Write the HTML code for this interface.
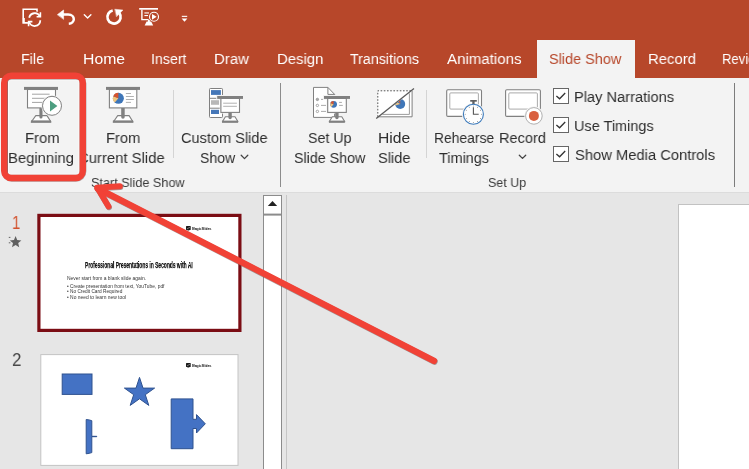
<!DOCTYPE html>
<html><head><meta charset="utf-8"><title>Slide Show</title>
<style>
html,body{margin:0;padding:0;}
body{width:749px;height:469px;overflow:hidden;position:relative;background:#e6e6e6;font-family:"Liberation Sans",sans-serif;}
.a{position:absolute;}
.x{position:absolute;white-space:nowrap;transform-origin:0 0;will-change:transform;}
svg{position:absolute;left:0;top:0;}
</style></head><body>
<div class="a" style="left:0;top:0;width:749px;height:78px;background:#b7472a;"></div>
<div class="a" style="left:0;top:78px;width:749px;height:114px;background:#f3f3f3;"></div>
<div class="a" style="left:0;top:192px;width:749px;height:1px;background:#dcdcdc;"></div>
<div class="a" style="left:537px;top:40px;width:98px;height:38px;background:#f3f3f3;"></div>
<svg width="749" height="469" viewBox="0 0 749 469">
<!-- quick access toolbar -->
<g fill="none" stroke="#fff" stroke-linecap="round" stroke-linejoin="round">
  <!-- autosave -->
  <path d="M23.2 9.300H37v13.600H23.200z" stroke-width="1.600" stroke-linejoin="miter"/>
  <rect x="22.800" y="18" width="2" height="5" fill="#fff" stroke="none"/>
  <circle cx="34.700" cy="18.900" r="7.600" fill="#b7472a" stroke="none"/>
  <path d="M29.200 17.700A5.700 5.700 0 0 1 39.900 16.400M40.300 20.300A5.700 5.700 0 0 1 29.100 21.800" stroke-width="1.800" stroke-linecap="butt"/>
  <path d="M40.400 12.300V16.800H36.600M28.600 26.200V21.600H32.400" stroke-width="1.600" stroke-linecap="butt" stroke-linejoin="miter"/>
  <!-- undo -->
  <path d="M62.500 14.500H68.200C72.200 14.500 73.800 17.200 73.800 19.200C73.800 21.600 71.600 23.500 68.800 23.700" stroke-width="2.500" stroke-linecap="butt"/>
  <path d="M57.600 14.500 63.600 10v9z" fill="#fff" stroke-width="0.600"/>
  <path d="M84.300 14.800 87.600 18 90.900 14.800" stroke-width="1.400"/>
  <!-- repeat -->
  <path d="M112.700 10.500A6.600 6.600 0 1 0 119.400 13.100" stroke-width="2.700" stroke-linecap="butt"/>
  <path d="M115 9.200 123 10 116.700 16.600z" fill="#fff" stroke-width="0.400"/>
</g>
<!-- present from beginning (qat) -->
<g fill="#fff">
  <rect x="139.2" y="8" width="18.8" height="1.7"/>
  <path d="M141.2 9.7h1.4v9.2h6v1.4h-7.4z"/>
  <rect x="144.4" y="12.4" width="4.6" height="1.1"/>
  <rect x="144.4" y="15" width="3.6" height="1.1"/>
  <path d="M146.6 21.6h4.6l2 3.8h-8.6z"/>
  <rect x="148" y="20" width="1.8" height="2.6"/>
</g>
<circle cx="154" cy="16.800" r="4.500" fill="#b7472a" stroke="#fff" stroke-width="1.100"/>
<path d="M152 13.900v5.800l4.600-2.900z" fill="#fff"/>
<rect x="181.8" y="15.8" width="5.4" height="1.1" fill="#fff"/>
<path d="M181.6 18.6h5.8l-2.9 3.2z" fill="#fff"/>

<!-- separators -->
<rect x="173" y="90" width="1" height="68" fill="#d4d4d4"/>
<rect x="426" y="90" width="1" height="68" fill="#d4d4d4"/>
<rect x="280" y="83" width="1" height="104" fill="#8c8c8c"/>
<rect x="734" y="83" width="1" height="104" fill="#7c7c7c"/>

<!-- ICON: from beginning -->
<g>
  <rect x="27.5" y="89.5" width="28" height="18.4" fill="#fff" stroke="#808080" stroke-width="1.1"/>
  <rect x="24" y="86.9" width="34" height="3" fill="#808080"/>
  <g stroke="#a4a4a4" stroke-width="1"><path d="M32 94.2h17.6M32 98.3h17.6M32 102.4h12"/></g>
  <path d="M35.8 115.6h11.2l4 6.4h-19.8z" fill="#fff" stroke="#808080" stroke-width="1.1" stroke-linejoin="round"/>
  <rect x="31" y="120.4" width="20" height="2.3" fill="#808080"/>
  <path d="M39.4 108h3.1v9a1.55 1.55 0 0 1-3.1 0z" fill="#808080"/>
  <circle cx="52" cy="105.8" r="10.6" fill="#f3f3f3"/>
  <circle cx="52" cy="105.8" r="9.5" fill="#fff" stroke="#808080" stroke-width="1"/>
  <path d="M50 100.6v10.8l7.4-5.4z" fill="#4d9e80"/>
</g>
<!-- ICON: from current slide -->
<g>
  <rect x="109.4" y="89.5" width="27.4" height="18.4" fill="#fff" stroke="#808080" stroke-width="1.1"/>
  <rect x="106" y="86.9" width="34" height="3" fill="#808080"/>
  <circle cx="118.4" cy="98.3" r="5.5" fill="#3f76b8"/>
  <path d="M118.4 98.3 114.8 102.5A5.5 5.5 0 0 1 113.3 96.2z" fill="#f1c57d"/>
  <path d="M118.4 98.3 113.3 96.2A5.5 5.5 0 0 1 118.4 92.8z" fill="#d9532c"/>
  <g stroke="#a8a8a8" stroke-width="0.9"><path d="M125.9 93.5h5.1M125.9 96.5h8M125.9 99.5h8M125.9 102.4h5.1"/></g>
  <path d="M117.7 115.6h11.4l4 6.4h-19.8z" fill="#fff" stroke="#808080" stroke-width="1.1" stroke-linejoin="round"/>
  <rect x="112.9" y="120.4" width="20.2" height="2.3" fill="#808080"/>
  <path d="M121.2 108h3.5v9a1.75 1.75 0 0 1-3.5 0z" fill="#808080"/>
</g>
<!-- ICON: custom slide show -->
<g>
  <rect x="209.5" y="88.5" width="13" height="29" rx="0.8" fill="#fff" stroke="#808080" stroke-width="1"/>
  <path d="M209.5 98.3h13M209.5 108.2h13" stroke="#808080" stroke-width="1"/>
  <rect x="211" y="90.1" width="9.9" height="4.8" fill="#4577b8"/>
  <rect x="211" y="100.2" width="8" height="4.6" fill="#b8b8b8"/>
  <rect x="211" y="109.8" width="8" height="4.2" fill="#4577b8"/>
  <rect x="216.2" y="95" width="27.8" height="4.9" fill="#f3f3f3"/><rect x="219.7" y="98" width="21" height="15.6" fill="#f3f3f3"/>
  <path d="M225.4 116.8h9.6l3 5h-15.6z" fill="#fff" stroke="#808080" stroke-width="1.1" stroke-linejoin="round"/>
  <rect x="222" y="120.6" width="16" height="2.2" fill="#808080"/>
  <path d="M228.4 112.5h3.4v5a1.7 1.7 0 0 1-3.4 0z" fill="#808080"/>
  <rect x="220.9" y="98.4" width="18.6" height="14" fill="#fff" stroke="#808080" stroke-width="1.1"/>
  <rect x="217.2" y="96" width="25.8" height="2.9" fill="#808080"/>
  <path d="M223.2 103.2h13.7M223.2 106.3h13.7" stroke="#a8a8a8" stroke-width="0.9"/>
</g>
<!-- ICON: set up slide show -->
<g>
  <path d="M313.5 87.4h14.4l6.7 7v23h-21.1z" fill="#fff" stroke="#808080" stroke-width="1" stroke-linejoin="round"/>
  <path d="M327.9 87.4v7h6.7" fill="none" stroke="#808080" stroke-width="1"/>
  <g fill="#fff" stroke="#909090" stroke-width="0.8"><circle cx="317.4" cy="99.4" r="1.2" fill="#aaa"/><circle cx="317.4" cy="105.4" r="1.2"/><circle cx="317.4" cy="111.4" r="1.2"/></g>
  <path d="M321 99.4h2M321 105.4h5M321 111.4h5" stroke="#a0a0a0" stroke-width="0.9"/>
  <rect x="323" y="95" width="28" height="4.9" fill="#f3f3f3"/><rect x="326.5" y="98" width="21" height="15.6" fill="#f3f3f3"/>
  <path d="M332.3 116.8h9.5l3 5h-15.6z" fill="#fff" stroke="#808080" stroke-width="1.1" stroke-linejoin="round"/>
  <rect x="329" y="120.6" width="15.8" height="2.2" fill="#808080"/>
  <path d="M335.2 112.5h3.4v5a1.7 1.7 0 0 1-3.4 0z" fill="#808080"/>
  <rect x="327.7" y="98.4" width="18.6" height="14" fill="#fff" stroke="#808080" stroke-width="1.1"/>
  <rect x="324" y="96" width="26" height="2.9" fill="#808080"/>
  <circle cx="333.6" cy="104.3" r="3.4" fill="#3f76b8"/>
  <path d="M333.6 104.3 331.4 106.9A3.4 3.4 0 0 1 330.4 103z" fill="#f1c57d"/>
  <path d="M333.6 104.3 330.4 103A3.4 3.4 0 0 1 333.6 100.9z" fill="#d9532c"/>
  <path d="M339.1 102.4h2.8M339.1 105.4h3.7" stroke="#a0a0a0" stroke-width="0.9"/>
</g>
<!-- ICON: hide slide -->
<g>
  <rect x="377.8" y="90.8" width="34.3" height="26" fill="#fff"/>
  <path d="M412.1 90.8v26h-34.3" fill="none" stroke="#808080" stroke-width="1"/>
  <path d="M377.8 116.8v-26h34.3" fill="none" stroke="#555" stroke-width="1" stroke-dasharray="1.6 1.6"/>
  <path d="M409.4 93.4v21h-27" fill="none" stroke="#909090" stroke-width="0.9"/>
  <clipPath id="hc"><path d="M376.2 119.6 414 89.5v31z"/></clipPath>
  <g clip-path="url(#hc)">
    <circle cx="400.2" cy="104" r="5" fill="#3f76b8"/>
    <path d="M400.2 104 395.4 105.6 396 101.6z" fill="#f1c57d"/>
    <path d="M400.2 104 397.6 99.6 400.2 99z" fill="#d9532c"/>
  </g>
  <path d="M376.2 118.6 414 88.5" stroke="#5a5a5a" stroke-width="1.3"/>
</g>
<!-- ICON: rehearse timings -->
<g>
  <rect x="446.7" y="89.8" width="34.8" height="26.6" rx="1.2" fill="#fff" stroke="#808080" stroke-width="1.1"/>
  <rect x="449.8" y="92.9" width="28.6" height="16.2" rx="1" fill="#fff" stroke="#a0a0a0" stroke-width="0.9"/>
  <circle cx="473.4" cy="114.3" r="11.4" fill="#f3f3f3"/>
  <rect x="470.2" y="100" width="6.6" height="1.7" fill="#606060"/>
  <rect x="472.3" y="101" width="2.3" height="3.4" fill="#606060"/>
  <circle cx="473.4" cy="114.3" r="10" fill="#fff" stroke="#3c7abb" stroke-width="1.1"/>
  <path d="M473.4 107.2v7.1h5.3" fill="none" stroke="#555" stroke-width="1.1"/>
  <g fill="#888"><circle cx="473.4" cy="106.1" r="0.5"/><circle cx="477.5" cy="107.2" r="0.5"/><circle cx="480.5" cy="110.2" r="0.5"/><circle cx="481.6" cy="114.3" r="0.5"/><circle cx="480.5" cy="118.4" r="0.5"/><circle cx="477.5" cy="121.4" r="0.5"/><circle cx="473.4" cy="122.5" r="0.5"/><circle cx="469.3" cy="121.4" r="0.5"/><circle cx="466.3" cy="118.4" r="0.5"/><circle cx="465.2" cy="114.3" r="0.5"/><circle cx="466.3" cy="110.2" r="0.5"/><circle cx="469.3" cy="107.2" r="0.5"/></g>
</g>
<!-- ICON: record -->
<g>
  <rect x="505.6" y="89.8" width="34.8" height="26.6" rx="1.2" fill="#fff" stroke="#808080" stroke-width="1.1"/>
  <rect x="508.8" y="92.9" width="28.6" height="16.2" rx="1" fill="#fff" stroke="#a0a0a0" stroke-width="0.9"/>
  <circle cx="533.9" cy="115.9" r="9.6" fill="#f3f3f3"/>
  <circle cx="533.9" cy="115.9" r="8.3" fill="#fff" stroke="#b0b0b0" stroke-width="1"/>
  <circle cx="533.9" cy="115.9" r="5" fill="#d9603f"/>
</g>
<!-- chevrons -->
<g fill="none" stroke="#444" stroke-width="1.3" stroke-linecap="round" stroke-linejoin="round">
  <path d="M241.2 155.3 244.5 158.6 247.8 155.3"/>
  <path d="M519.3 155.2 522.5 158.4 525.7 155.2"/>
</g>
<!-- checkboxes -->
<g fill="#fff" stroke="#666" stroke-width="1">
  <rect x="553.5" y="88.5" width="15" height="15"/>
  <rect x="553.5" y="117.5" width="15" height="15"/>
  <rect x="553.5" y="146.5" width="15" height="15"/>
</g>
<g fill="none" stroke="#333" stroke-width="1.3">
  <path d="M556.4 96 559.6 98.8 565.2 93"/>
  <path d="M556.4 125 559.6 127.8 565.2 122"/>
  <path d="M556.4 154 559.6 156.8 565.2 151"/>
</g>

<!-- pane divider -->
<rect x="286" y="195" width="1" height="274" fill="#c6c6c6"/>
<!-- scrollbar -->
<rect x="263.5" y="195.500" width="18" height="280" fill="#fff" stroke="#8c8c8c" stroke-width="1"/>
<rect x="263.500" y="195.500" width="18" height="19" fill="#fff" stroke="#8c8c8c" stroke-width="1"/>
<path d="M267.800 206 272.500 201 277.200 206z" fill="#222"/>
<rect x="263" y="213.600" width="19" height="2" fill="#8c8c8c"/>
<!-- editing slide -->
<rect x="678.500" y="204.500" width="80" height="280" fill="#fff" stroke="#c2c2c2" stroke-width="1"/>

<!-- slide 1 thumb -->
<rect x="38.900" y="215.400" width="201" height="115" fill="#fff" stroke="#7b0d14" stroke-width="3.2"/>
<g fill="#1c1c1c"><rect x="186" y="226" width="4.7" height="3.9" rx="0.5"/><rect x="187.3" y="230.2" width="2" height="0.5"/></g>
<path d="M186.9 228.9 189.9 227.3" stroke="#ddd" stroke-width="0.5"/>
<!-- star (animation marker) -->
<path transform="translate(-0.8 0.3)" d="M16.4 235.8 18 239.8 22.2 240.1 19 242.8 20 246.9 16.4 244.6 12.8 246.9 13.8 242.8 10.6 240.1 14.8 239.8z" fill="#606060"/>
<path d="M8.8 237.4h1.6M8.8 242.8h1.6" stroke="#555" stroke-width="0.9"/>

<!-- slide 2 thumb -->
<rect x="40.8" y="354.6" width="197.2" height="110.8" fill="#fff" stroke="#c4c4c4" stroke-width="1"/>
<g fill="#1c1c1c"><rect x="186" y="363" width="4.700" height="3.900" rx="0.500"/><rect x="187.300" y="367.200" width="2" height="0.500"/></g>
<path d="M186.900 365.900 189.900 364.300" stroke="#ddd" stroke-width="0.500"/>
<g fill="#4472c4" stroke="#2f528f" stroke-width="1" stroke-linejoin="miter">
  <rect x="62.200" y="374" width="29.800" height="20.400"/>
  <path d="M139.500 377.400 143 388.100 154.600 388.100 145.300 394.700 148.800 405.400 139.500 398.800 130.200 405.400 133.700 394.700 124.400 388.100 136 388.100z"/>
  <path d="M171.200 398.900H193V419.300h3.500V414.600L205.300 423.800 196.500 433V428.500H193V448.700H171.200z"/>
  <path d="M86.200 419.500Q89 419.700 91.800 420.700V436.300h5v0.400h-5V452.600Q89 453.500 86.200 453.800z"/>
</g>
</svg>

<!-- text -->
<div class="x" style="left:21.07px;top:48.11px;font-size:15.3px;line-height:21.42px;color:#fff;transform:scaleX(0.9334);">File</div>
<div class="x" style="left:83.27px;top:48.11px;font-size:15.3px;line-height:21.42px;color:#fff;transform:scaleX(1.0306);">Home</div>
<div class="x" style="left:151.37px;top:48.11px;font-size:15.3px;line-height:21.42px;color:#fff;transform:scaleX(0.9261);">Insert</div>
<div class="x" style="left:214.22px;top:48.11px;font-size:15.3px;line-height:21.42px;color:#fff;transform:scaleX(0.9762);">Draw</div>
<div class="x" style="left:276.62px;top:48.11px;font-size:15.3px;line-height:21.42px;color:#fff;transform:scaleX(0.9760);">Design</div>
<div class="x" style="left:350.00px;top:48.11px;font-size:15.3px;line-height:21.42px;color:#fff;transform:scaleX(0.9304);">Transitions</div>
<div class="x" style="left:447.00px;top:48.11px;font-size:15.3px;line-height:21.42px;color:#fff;transform:scaleX(0.9866);">Animations</div>
<div class="x" style="left:648.33px;top:48.11px;font-size:15.3px;line-height:21.42px;color:#fff;transform:scaleX(0.9727);">Record</div>
<div class="x" style="left:549.30px;top:48.11px;font-size:15.3px;line-height:21.42px;color:#b7472a;transform:scaleX(0.9447);">Slide Show</div>
<div class="x" style="left:722.15px;top:48.11px;font-size:15.3px;line-height:21.42px;color:#fff;transform:scaleX(0.8541);">Review</div>
<div class="x" style="left:24.63px;top:127.11px;font-size:15.3px;line-height:21.42px;color:#2e2e2e;transform:scaleX(0.9692);">From</div>
<div class="x" style="left:8.43px;top:147.11px;font-size:15.3px;line-height:21.42px;color:#2e2e2e;transform:scaleX(0.9694);">Beginning</div>
<div class="x" style="left:106.04px;top:127.11px;font-size:15.3px;line-height:21.42px;color:#2e2e2e;transform:scaleX(0.9604);">From</div>
<div class="x" style="left:78.20px;top:147.11px;font-size:15.3px;line-height:21.42px;color:#2e2e2e;clip-path:inset(0 0 0 5px);transform:scaleX(0.9711);">Current Slide</div>
<div class="x" style="left:181.20px;top:127.11px;font-size:15.3px;line-height:21.42px;color:#2e2e2e;transform:scaleX(0.9507);">Custom Slide</div>
<div class="x" style="left:200.00px;top:147.11px;font-size:15.3px;line-height:21.42px;color:#2e2e2e;transform:scaleX(0.9180);">Show</div>
<div class="x" style="left:308.40px;top:127.11px;font-size:15.3px;line-height:21.42px;color:#2e2e2e;transform:scaleX(0.9296);">Set Up</div>
<div class="x" style="left:293.80px;top:147.11px;font-size:15.3px;line-height:21.42px;color:#2e2e2e;transform:scaleX(0.9318);">Slide Show</div>
<div class="x" style="left:378.48px;top:127.11px;font-size:15.3px;line-height:21.42px;color:#2e2e2e;transform:scaleX(1.0249);">Hide</div>
<div class="x" style="left:378.20px;top:147.11px;font-size:15.3px;line-height:21.42px;color:#2e2e2e;transform:scaleX(0.9550);">Slide</div>
<div class="x" style="left:433.69px;top:127.11px;font-size:15.3px;line-height:21.42px;color:#2e2e2e;transform:scaleX(0.9071);">Rehearse</div>
<div class="x" style="left:439.20px;top:147.11px;font-size:15.3px;line-height:21.42px;color:#2e2e2e;transform:scaleX(0.9451);">Timings</div>
<div class="x" style="left:498.85px;top:127.11px;font-size:15.3px;line-height:21.42px;color:#2e2e2e;transform:scaleX(0.9518);">Record</div>
<div class="x" style="left:574.44px;top:86.11px;font-size:15.3px;line-height:21.42px;color:#2e2e2e;transform:scaleX(0.9565);">Play Narrations</div>
<div class="x" style="left:574.45px;top:115.11px;font-size:15.3px;line-height:21.42px;color:#2e2e2e;transform:scaleX(0.9465);">Use Timings</div>
<div class="x" style="left:575.40px;top:144.11px;font-size:15.3px;line-height:21.42px;color:#2e2e2e;transform:scaleX(0.9634);">Show Media Controls</div>
<div class="x" style="left:91.00px;top:174.10px;font-size:13.2px;line-height:18.48px;color:#3a3a3a;transform:scaleX(0.9595);">Start Slide Show</div>
<div class="x" style="left:488.30px;top:174.10px;font-size:13.2px;line-height:18.48px;color:#3a3a3a;transform:scaleX(0.9454);">Set Up</div>
<div class="x" style="left:12.22px;top:210.10px;font-size:19px;line-height:26.6px;color:#d2522e;transform:scaleX(0.7778);">1</div>
<div class="x" style="left:11.50px;top:347.11px;font-size:19.2px;line-height:26.88px;color:#484848;transform:scaleX(0.8800);">2</div>
<div class="x" style="left:85.20px;top:259.10px;font-size:9.2px;line-height:12.88px;color:#111;font-weight:bold;-webkit-text-stroke:0.25px #111;transform:scaleX(0.5323);">Professional Presentations in Seconds with AI</div>
<div class="x" style="left:66.70px;top:276.10px;font-size:4.6px;line-height:6.44px;color:#333;transform:scaleX(1.0743);">Never start from a blank slide again.</div>
<div class="x" style="left:66.70px;top:284.10px;font-size:4.6px;line-height:6.44px;color:#333;transform:scaleX(1.0611);">• Create presentation from text, YouTube, pdf</div>
<div class="x" style="left:66.70px;top:289.10px;font-size:4.6px;line-height:6.44px;color:#333;transform:scaleX(1.0356);">• No Credit Card Required</div>
<div class="x" style="left:66.70px;top:295.10px;font-size:4.6px;line-height:6.44px;color:#333;transform:scaleX(1.0685);">• No need to learn new tool</div>
<div class="x" style="left:192.20px;top:226.20px;font-size:4.4px;line-height:6.16px;color:#111;font-weight:bold;transform:scaleX(0.7634);">MagicSlides</div>
<div class="x" style="left:192.20px;top:363.20px;font-size:4.4px;line-height:6.16px;color:#111;font-weight:bold;transform:scaleX(0.7634);">MagicSlides</div>
<!-- annotation -->
<svg width="749" height="469" viewBox="0 0 749 469">
<rect x="7.6" y="78.9" width="72.3" height="96.2" rx="2.5" fill="none" stroke="#7c7c7c" stroke-width="1"/>
<rect x="8.5" y="79.8" width="70.5" height="94.4" rx="1.8" fill="none" stroke="#fdfdfd" stroke-width="0.9"/>
<rect x="4.2" y="75.7" width="78.6" height="102.3" rx="7.2" ry="7.2" fill="none" stroke="#6b5050" stroke-opacity="0.5" stroke-width="6.4" transform="translate(0.4 0.5)"/>
<rect x="4.2" y="75.7" width="78.6" height="102.3" rx="7.2" ry="7.2" fill="none" stroke="#f14236" stroke-width="6.4"/>
<g fill="none" stroke="#6b5050" stroke-opacity="0.55" stroke-width="6.4" stroke-linecap="round" stroke-linejoin="round" transform="translate(0.5 0.8)">
  <path d="M434 360.8 97.6 188.3"/>
  <path d="M119.8 186.3 97.2 187.6 108.5 206.4" stroke-width="5.9"/>
</g>
<g fill="none" stroke="#f14236" stroke-width="6.4" stroke-linecap="round" stroke-linejoin="round">
  <path d="M434 360.8 97.6 188.3"/>
  <path d="M119.8 186.3 97.2 187.6 108.5 206.4" stroke-width="5.9"/>
</g>
</svg>
</body></html>
